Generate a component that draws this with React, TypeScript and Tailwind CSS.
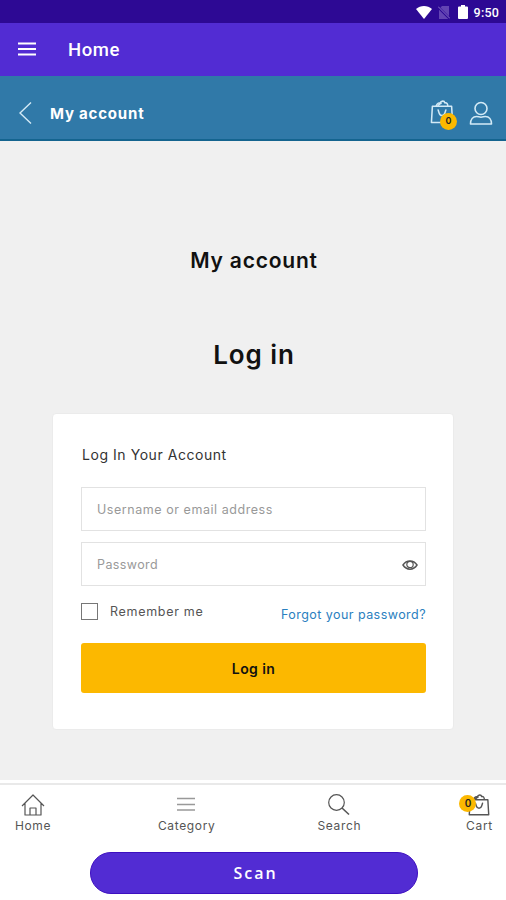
import React, { useState } from "react";

// --- Icons ---
function BagIcon({ className }: { className?: string }) {
  return (
    <svg viewBox="0 0 24 26" className={className} fill="none" stroke="currentColor" strokeWidth="1.600" strokeLinejoin="round" strokeLinecap="round">
      <path d="M2 6.500h20l1 17H1l1-17Z" />
      <path d="M6 6c1-3 3-3.500 5-2.500M10 3.500C11 .5 14.500.5 15 3c2-.5 3 1 3 3M8 5.500l2.500-2" />
      <path d="m8 10.500 1 3c1 3.500 5 3.500 6 0l1-3" />
    </svg>
  );
}

function UserIcon() {
  return (
    <svg viewBox="0 0 24 24" className="h-6 w-6" fill="none" stroke="currentColor" strokeWidth="1.600" strokeLinejoin="round">
      <circle cx="12" cy="7.500" r="6" />
      <path d="M1.500 23c0-4.500 2.500-7.500 6-7.500 2 0 2.500.700 4.500.700s2.500-.700 4.500-.700c3.500 0 6 3 6 7.500h-21Z" />
    </svg>
  );
}

function Badge({ className }: { className: string }) {
  return (
    <span className={`absolute flex items-center justify-center rounded-full bg-[#fcb800] font-semibold text-[#222] ${className}`}>
      0
    </span>
  );
}

// --- Status Bar ---
function StatusBar() {
  return (
    <div className="flex h-[23px] items-center justify-end bg-[#2d0994] pr-[7px] pt-px text-white">
      <svg viewBox="0 0 16 13" className="h-[13px] w-4" fill="currentColor">
        <path d="M8 13 0 3c4.500-4 11.500-4 16 0L8 13Z" />
      </svg>
      <svg viewBox="0 0 12 13" className="ml-[6px] h-[13px] w-3">
        <path d="M4 0h7v13H1V3l3-3Z" fill="#6344b3" />
        <path d="m0 1 12 12" stroke="#2d0994" strokeWidth="2.500" />
        <path d="m0 .5 12 12" stroke="#8b70ca" strokeWidth="1" />
      </svg>
      <svg viewBox="0 0 10 14" className="ml-[8px] h-[14px] w-[10px]" fill="currentColor">
        <path d="M3 0h4v1.500h2q1 0 1 1V13q0 1-1 1H1q-1 0-1-1V2.500q0-1 1-1h2V0Z" />
      </svg>
      <span className="ml-[6px] pt-[2px] font-[Roboto] text-[12.500px] leading-none font-medium tracking-[0.2px]">9:50</span>
    </div>
  );
}

// --- Bottom Navigation ---
const navItems = [
  {
    label: "Home",
    width: "w-[66px]",
    icon: (
      <svg viewBox="0 0 24 24" className="h-6 w-6" fill="none" stroke="#555" strokeWidth="1.2" strokeLinejoin="round">
        <path d="M1 13 12 2l11 11M4 10.500V22h16V10.500M9 22v-7h6v7" />
      </svg>
    ),
  },
  {
    label: "Category",
    width: "w-[78px]",
    icon: (
      <svg viewBox="0 0 24 24" className="h-6 w-6" fill="none" stroke="#999" strokeWidth="1.5">
        <path d="M2 5.500h18M2 11.500h18M2 17h18" />
      </svg>
    ),
  },
  {
    label: "Search",
    width: "w-[64px]",
    icon: (
      <svg viewBox="0 0 24 24" className="h-6 w-6" fill="none" stroke="#555" strokeWidth="1.2">
        <circle cx="9.500" cy="9.500" r="7.800" />
        <path d="m15 15 7 6.500" strokeWidth="1.6" />
      </svg>
    ),
  },
  {
    label: "Cart",
    width: "w-[53px]",
    icon: (
      <span className="relative flex h-6 w-6 items-center justify-center">
        <BagIcon className="h-[23px] w-[22px] text-[#555]" />
        <Badge className="top-[2px] -left-[8px] h-[17px] w-[17px] text-[10px]" />
      </span>
    ),
  },
];

function BottomNav() {
  return (
    <nav className="flex h-[56px] justify-between">
      {navItems.map((item) => (
        <a key={item.label} className={`flex flex-col items-center pt-2 ${item.width}`}>
          {item.icon}
          <span className="text-[12px] leading-[18px] tracking-[0.65px] text-[#555]">{item.label}</span>
        </a>
      ))}
    </nav>
  );
}

// --- Main Component ---
export default function App() {
  const [remember, setRemember] = useState(false);
  const [visible, setVisible] = useState(false);

  return (
    <div className="flex h-[900px] w-[506px] flex-col overflow-hidden bg-white font-[Inter,sans-serif]">
      <StatusBar />

      {/* App Bar */}
      <header className="flex h-[53px] items-center bg-[#522cd3] pl-[18px] text-white">
        <svg viewBox="0 0 18 14" className="mb-px h-[14px] w-[18px]" stroke="currentColor" strokeWidth="1.800">
          <path d="M0 1.500h18M0 7h18M0 12.500h18" />
        </svg>
        <span className="ml-8 pt-[2px] font-[Roboto] text-[18.500px] font-medium tracking-[0.6px]">Home</span>
      </header>

      {/* Page Bar */}
      <div className="flex h-[65px] items-center border-b-2 border-[#14648f] bg-[#3079a8] pt-[11px] pr-[13px] pl-[19px] text-white">
        <svg viewBox="0 0 13 22" className="h-[22px] w-[13px]" fill="none" stroke="#d3eaf6" strokeWidth="1.4">
          <path d="M12 .5 1 11l11 10.500" />
        </svg>
        <span className="ml-[18px] pt-[2px] text-[15px] font-bold tracking-[0.8px]">My account</span>
        <div className="ml-auto flex items-center gap-[15px] text-[#d3eaf6]">
          <span className="relative">
            <BagIcon className="-mt-[2px] h-[25px] w-6" />
            <Badge className="top-[11px] left-[10px] h-[17px] w-[17px] text-[9px]" />
          </span>
          <UserIcon />
        </div>
      </div>

      {/* Content */}
      <main className="flex h-[639px] flex-col items-center bg-[#f0f0f0] pt-[106px]">
        <h1 className="ml-[2px] text-[21px] leading-7 font-semibold tracking-[0.8px] text-[#111]">My account</h1>
        <h2 className="ml-[2px] mt-[62px] text-[26px] leading-9 font-semibold tracking-[0.9px] text-[#111]">Log in</h2>

        <form className="mt-[40px] h-[317px] w-[402px] rounded-[4px] border border-[#ebebeb] bg-white pr-[27px] pl-[28px] pt-[30px]">
          <h3 className="ml-px text-[14px] leading-[22px] tracking-[0.55px] text-[#333]">Log In Your Account</h3>

          <input
            type="text"
            placeholder="Username or email address"
            className="mt-[21px] block h-[44px] w-full border border-[#e2e2e2] px-[15px] text-[12.500px] tracking-[0.55px] outline-none placeholder:text-[#999]"
          />
          <div className="relative mt-[11px]">
            <input
              type={visible ? "text" : "password"}
              placeholder="Password"
              className="block h-[44px] w-full border border-[#e2e2e2] px-[15px] text-[12.500px] tracking-[0.4px] outline-none placeholder:text-[#999]"
            />
            <button type="button" onClick={() => setVisible(!visible)} className="absolute top-[17px] right-[8px]">
              <svg viewBox="0 0 16 12" className="h-3 w-4" fill="none" stroke="#555" strokeWidth="1.5">
                <path d="M1 6c3.500-5.500 10.500-5.500 14 0-3.500 5.500-10.500 5.500-14 0Z" />
                <circle cx="8" cy="5.500" r="3.200" strokeWidth="1.2" />
              </svg>
            </button>
          </div>

          <div className="mt-[17px] flex h-[18px] justify-between">
            <label className="flex items-center gap-[12px] text-[12.500px] tracking-[0.7px] text-[#555]">
              <input
                type="checkbox"
                checked={remember}
                onChange={() => setRemember(!remember)}
                className="mb-px h-[17px] w-[17px] appearance-none border border-[#777] checked:bg-[#fcb800]"
              />
              <span>Remember me</span>
            </label>
            <a className="pt-[3px] text-[12.500px] leading-[18px] tracking-[0.45px] text-[#2a80c0]">Forgot your password?</a>
          </div>

          <button type="button" className="mt-[22px] h-[50px] w-full rounded-[3px] bg-[#fcb800] text-[14px] font-semibold tracking-[0.4px] text-[#111]">
            Log in
          </button>
        </form>
      </main>

      {/* Footer */}
      <footer className="flex h-[120px] flex-col bg-white pt-[3px]">
        <div className="h-[2px] shrink-0 bg-[#e9e9e9]" />
        <BottomNav />
        <button type="button" className="mt-[11px] ml-[90px] h-[42px] w-[328px] shrink-0 rounded-full border border-[#3d0fc0] bg-[#522cd3] pl-[3px] font-['Open_Sans'] text-[16px] font-semibold tracking-[2px] text-white">
          Scan
        </button>
      </footer>
    </div>
  );
}
